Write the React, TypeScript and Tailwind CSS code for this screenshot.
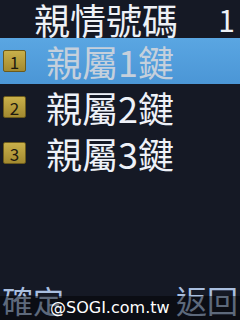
import React from "react";

const contacts = ["親屬1鍵", "親屬2鍵", "親屬3鍵"];

const font = { fontFamily: '"Noto Sans CJK TC", "Noto Sans", sans-serif' };

export default function App() {
  return (
    <div
      className="relative w-[240px] h-[320px] overflow-hidden bg-[#151925] flex flex-col"
      style={font}
    >
      <div className="h-[38px] flex items-center justify-between pl-[34px] pr-[5px] text-[#eef1f6]">
        <span className="text-[36px] leading-none">親情號碼</span>
        <span className="text-[30px] leading-none">1</span>
      </div>

      <div className="flex flex-col">
        {contacts.map((name, i) => {
          const active = i === 0;
          return (
            <div
              key={name}
              className={
                "h-[46px] flex items-center " +
                (active ? "bg-gradient-to-b from-[#5aa6e2] to-[#4b96d6]" : "")
              }
            >
              <div className="shrink-0 ml-[3px] w-[23px] h-[22px] rounded-[2px] border border-[#6b5a1c] bg-gradient-to-b from-[#c9b04a] to-[#a38a30] flex items-center justify-center text-[17px] leading-none text-[#1d1a10]">
                {i + 1}
              </div>
              <span
                className={
                  "ml-[20px] text-[36px] leading-none " +
                  (active ? "text-[#c5d0dc]" : "text-[#eef1f8]")
                }
              >
                {name}
              </span>
            </div>
          );
        })}
      </div>

      <div className="flex-1" />

      <div className="h-[42px] flex items-center justify-between px-[2px] text-[31px] leading-none text-[#a9bfe0]">
        <span>確定</span>
        <span>返回</span>
      </div>

      <div className="absolute left-0 right-0 bottom-0 h-[24px] bg-black/45 flex items-center pl-[50px]">
        <span
          className="text-[16px] leading-none text-white"
          style={{ fontFamily: '"DejaVu Sans", sans-serif' }}
        >
          @SOGI.com.tw
        </span>
      </div>
    </div>
  );
}
